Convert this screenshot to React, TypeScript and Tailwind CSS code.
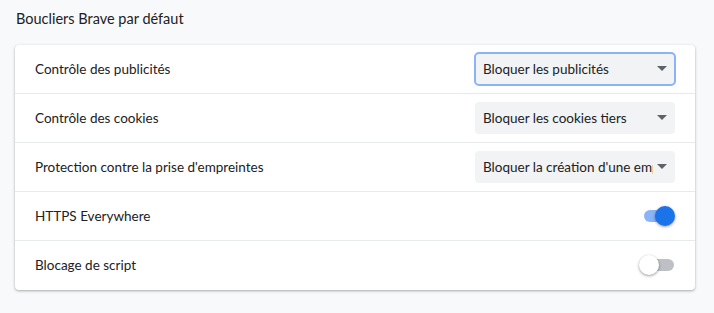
const font = { fontFamily: "Lato, 'Open Sans', sans-serif" };

function Select({ value, focused }: { value: string; focused?: boolean }) {
  return (
    <div
      className={`flex h-8 w-[200px] items-center justify-between overflow-hidden rounded bg-[#f1f3f4] pl-2 pr-2 text-[13.5px] text-[#202124] ${
        focused ? "outline-2 -outline-offset-1 outline-[#8ab4f8]" : ""
      }`}
    >
      <span className="whitespace-nowrap overflow-hidden">{value}</span>
      <svg width="10" height="5" viewBox="0 0 10 5" className="ml-1 shrink-0">
        <path d="M0 0h10L5 5z" fill="#5f6368" />
      </svg>
    </div>
  );
}

function Toggle({ on }: { on: boolean }) {
  return (
    <div className="relative mr-[1px] h-3 w-[30px] shrink-0">
      <div
        className={`h-3 w-[30px] rounded-full ${on ? "bg-[#8ab4f8]" : "bg-[#bdc1c6]"}`}
      />
      <div
        className={`absolute top-[-4px] h-5 w-5 rounded-full shadow-[0_1px_3px_rgba(0,0,0,0.4)] ${
          on ? "right-[-1px] bg-[#1a73e8]" : "left-[-5px] bg-white"
        }`}
      />
    </div>
  );
}

function Row({
  label,
  children,
  last,
}: {
  label: string;
  children: React.ReactNode;
  last?: boolean;
}) {
  return (
    <div
      className={`flex h-[49px] items-center justify-between pl-5 pr-5 ${
        last ? "" : "border-b border-[#e8eaed]"
      }`}
    >
      <span className="text-[13.5px] text-[#202124]">{label}</span>
      {children}
    </div>
  );
}

export default function App() {
  return (
    <div className="min-h-[313px] bg-[#f8f9fa] px-[15px] pt-[8px]" style={font}>
      <h2 className="mb-[15px] pl-[1px] text-[14.5px] font-normal text-[#202124]">
        Boucliers Brave par défaut
      </h2>
      <div className="w-[680px] rounded bg-white shadow-[0_1px_3px_rgba(60,64,67,0.3),0_1px_2px_rgba(60,64,67,0.15)]">
        <Row label="Contrôle des publicités">
          <Select value="Bloquer les publicités" focused />
        </Row>
        <Row label="Contrôle des cookies">
          <Select value="Bloquer les cookies tiers" />
        </Row>
        <Row label="Protection contre la prise d'empreintes">
          <Select value="Bloquer la création d'une empreinte digitale" />
        </Row>
        <Row label="HTTPS Everywhere">
          <Toggle on />
        </Row>
        <Row label="Blocage de script" last>
          <Toggle on={false} />
        </Row>
      </div>
    </div>
  );
}
